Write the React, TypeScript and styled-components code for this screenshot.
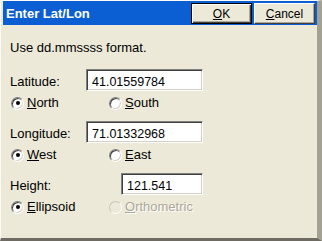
import styled, { createGlobalStyle } from 'styled-components'

const GlobalStyle = createGlobalStyle`
  html, body {
    margin: 0;
    padding: 0;
    background: #ece9d8;
  }
  body {
    font-family: "Liberation Sans", Arial, sans-serif;
  }
`

type RadioItem = { label: string; key: string; checked?: boolean; disabled?: boolean }

function Mnemonic({ text }: { text: string }) {
  return (
    <>
      <u>{text[0]}</u>
      {text.slice(1)}
    </>
  )
}

function RadioPair({ items }: { items: RadioItem[] }) {
  return (
    <RadioRow>
      {items.map((item) => (
        <RadioOption key={item.key} $disabled={item.disabled}>
          <RadioCircle $checked={item.checked} $disabled={item.disabled} />
          <span>
            <Mnemonic text={item.label} />
          </span>
        </RadioOption>
      ))}
    </RadioRow>
  )
}

export default function App() {
  return (
    <>
      <GlobalStyle />
      <Window>
        <TitleBar>
          <Title>Enter Lat/Lon</Title>
          <Buttons>
            <DialogButton $default>
              <Mnemonic text="OK" />
            </DialogButton>
            <DialogButton>
              <Mnemonic text="Cancel" />
            </DialogButton>
          </Buttons>
        </TitleBar>

        <Body>
          <Hint>Use dd.mmssss format.</Hint>

          <Group>
            <FieldRow>
              <Label>Latitude:</Label>
              <TextBox $width={117} defaultValue="41.01559784" />
            </FieldRow>
            <RadioPair
              items={[
                { key: 'n', label: 'North', checked: true },
                { key: 's', label: 'South' },
              ]}
            />
          </Group>

          <Group>
            <FieldRow>
              <Label>Longitude:</Label>
              <TextBox $width={117} defaultValue="71.01332968" />
            </FieldRow>
            <RadioPair
              items={[
                { key: 'w', label: 'West', checked: true },
                { key: 'e', label: 'East' },
              ]}
            />
          </Group>

          <Group>
            <FieldRow>
              <Label>Height:</Label>
              <TextBox $width={82} defaultValue="121.541" />
            </FieldRow>
            <RadioPair
              items={[
                { key: 'el', label: 'Ellipsoid', checked: true },
                { key: 'or', label: 'Orthometric', disabled: true },
              ]}
            />
          </Group>
        </Body>
      </Window>
    </>
  )
}

const Window = styled.div`
  box-sizing: border-box;
  width: 322px;
  height: 241px;
  background: #ece9d8;
  border-top: 1px solid #fbfaf5;
  border-left: 1px solid #fbfaf5;
  border-right: 5px solid #a3a193;
  border-bottom: 3px solid #6e6c62;
  display: flex;
  flex-direction: column;
`

const TitleBar = styled.div`
  box-sizing: border-box;
  height: 24px;
  margin: 0 0 0 2px;
  padding: 2px 2px 1px 3px;
  background: #0b5fd3;
  display: flex;
  align-items: center;
  justify-content: space-between;
`

const Title = styled.div`
  color: #ffffff;
  font-size: 13px;
  font-weight: 700;
  line-height: 16px;
`

const Buttons = styled.div`
  display: flex;
  gap: 2px;
  align-self: stretch;
`

const DialogButton = styled.button<{ $default?: boolean }>`
  box-sizing: border-box;
  width: 61px;
  height: 21px;
  padding: 0;
  font-family: "Liberation Sans", Arial, sans-serif;
  font-size: 12px;
  color: #000;
  background: #ece9d8;
  border: 1px solid;
  border-color: ${(p) => (p.$default ? '#000 #000 #000 #000' : '#ffffff #404040 #404040 #ffffff')};
  box-shadow: ${(p) =>
    p.$default
      ? 'inset 1px 1px #ffffff, inset -1px -1px #404040, inset -2px -2px #aca899'
      : 'inset -1px -1px #aca899'};
`

const Body = styled.div`
  display: flex;
  flex-direction: column;
  padding: 15px 0 0 9px;
  font-size: 13px;
  line-height: 16px;
  color: #000;
`

const Hint = styled.div`
  margin-bottom: 13px;
`

const Group = styled.div`
  display: flex;
  flex-direction: column;
  margin-bottom: 10px;
`

const FieldRow = styled.div`
  width: 193px;
  display: flex;
  align-items: baseline;
  justify-content: space-between;
`

const Label = styled.span`
  white-space: nowrap;
`

const TextBox = styled.input<{ $width: number }>`
  box-sizing: border-box;
  width: ${(p) => p.$width}px;
  height: 22px;
  margin: 0;
  padding: 3px 0 0 5px;
  font-family: "Liberation Sans", Arial, sans-serif;
  font-size: 12.5px;
  color: #000;
  background: #ffffff;
  border: 1px solid;
  border-color: #808080 #ffffff #ffffff #808080;
  box-shadow: inset 1px 1px #404040, inset -1px -1px #d4d0c8;
  outline: none;
`

const RadioRow = styled.div`
  display: grid;
  grid-template-columns: 98px auto;
  margin-top: 4px;
  padding-left: 1px;
  height: 16px;
`

const RadioOption = styled.div<{ $disabled?: boolean }>`
  display: flex;
  align-items: center;
  gap: 3px;
  color: ${(p) => (p.$disabled ? '#aca899' : '#000')};
  text-shadow: ${(p) => (p.$disabled ? '1px 1px #ffffff' : 'none')};
`

const RadioCircle = styled.span<{ $checked?: boolean; $disabled?: boolean }>`
  box-sizing: border-box;
  position: relative;
  width: 13px;
  height: 13px;
  border-radius: 50%;
  border: 1px solid;
  border-color: ${(p) => (p.$disabled ? '#c8c6b8 #ffffff #ffffff #c8c6b8' : '#808080 #ffffff #ffffff #808080')};
  background: ${(p) => (p.$disabled ? '#ece9d8' : '#ffffff')};
  box-shadow: ${(p) => (p.$disabled ? 'none' : 'inset 1px 1px #404040, inset -1px -1px #d4d0c8')};

  &::after {
    content: '';
    display: ${(p) => (p.$checked ? 'block' : 'none')};
    position: absolute;
    left: 3.5px;
    top: 3.5px;
    width: 4px;
    height: 4px;
    border-radius: 50%;
    background: #000;
  }
`
